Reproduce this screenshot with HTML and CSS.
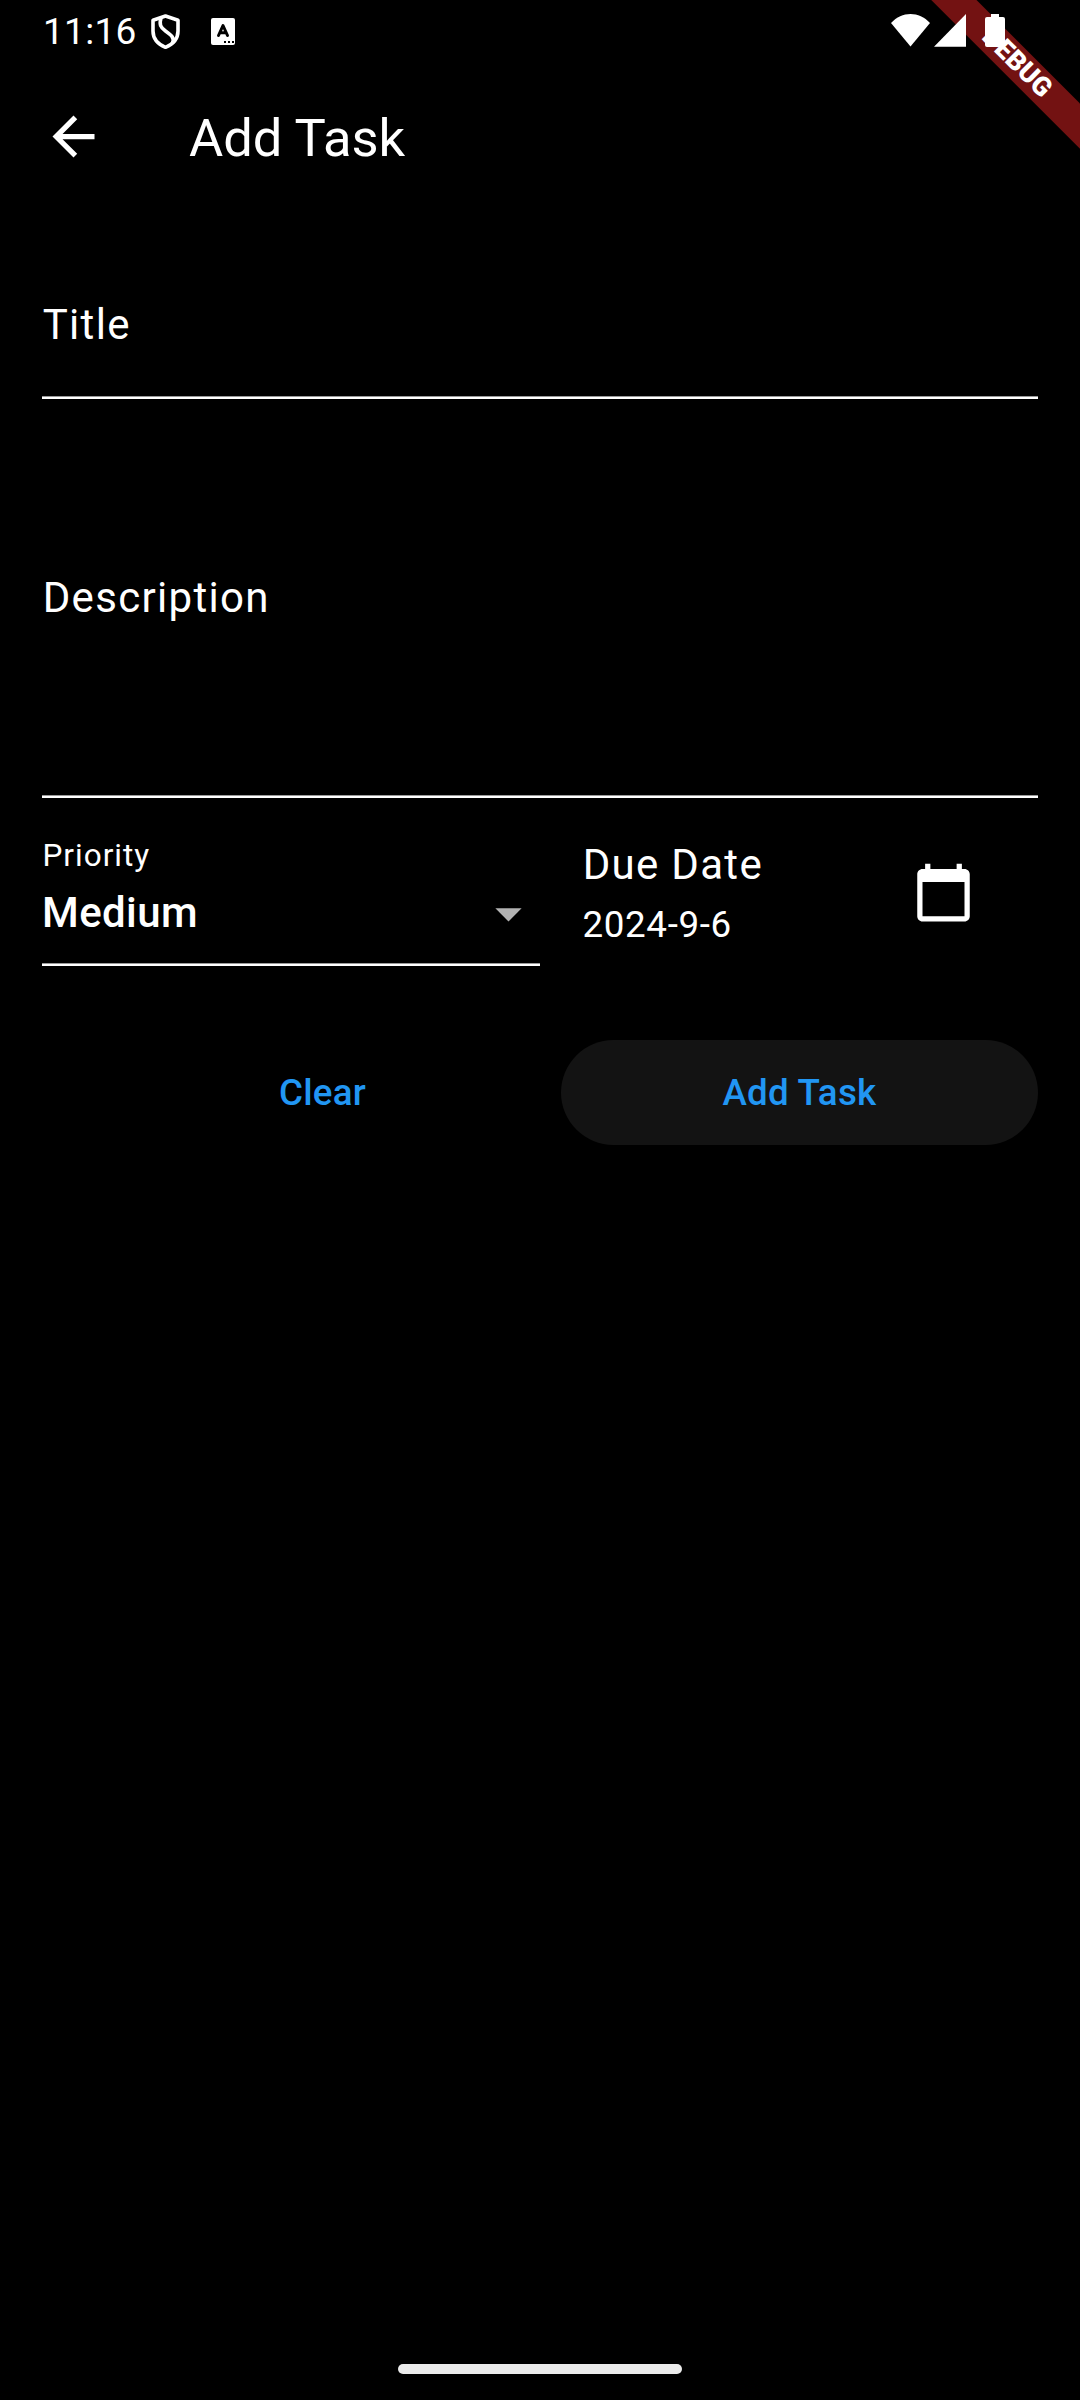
FILE: index.html
```html
<!DOCTYPE html>
<html lang="en">
<head>
<meta charset="utf-8">
<title>Add Task</title>
<link rel="stylesheet" href="styles.css">
</head>
<body>
<div class="screen">
  <div class="banner">DEBUG</div>
  <header class="status">
    <span class="clock">11:16</span>
    <svg class="shield" width="30" height="36" viewBox="0 0 30 36" fill="none" stroke="#fff" stroke-width="3.600" stroke-linejoin="round"><path d="M14.500 2 27 6.200V17c0 7.500-5 13.200-12.500 16.300C7 30.200 2 24.500 2 17V6.200z"/><path d="M10 4C8 10.500 9.500 13.500 14.500 17S24 23.500 21.500 29"/></svg>
    <svg class="letter" width="24" height="27" viewBox="0 0 24 27"><rect width="24" height="27" rx="2" fill="#fff"/><path d="M7.500 17.500 12 7.500l4.500 10M9 14.800h6" fill="none" stroke="#000" stroke-width="3" stroke-linecap="round" stroke-linejoin="round"/><path d="M13 23h2v2h-2zM17 23h2v2h-2zM21 23h2v2h-2z" fill="#000"/></svg>
    <svg class="signals" width="115" height="34" viewBox="0 0 115 34" fill="#fff"><path d="M0 9C11-3 28-3 39 9L19.500 32.500z"/><path d="M43 32.700 75 0v32.700z"/><path d="M100 0h8v3h4q2 0 2 2v26q0 2-2 2H96q-2 0-2-2V5q0-2 2-2h4z"/></svg>
  </header>
  <div class="appbar">
    <svg width="63" height="63" viewBox="0 0 24 24" fill="#fff"><path d="M20 11H7.830l5.590-5.590L12 4l-8 8 8 8 1.410-1.410L7.830 13H20v-2z"/></svg>
    <h1>Add Task</h1>
  </div>
  <main>
    <div class="field title">Title</div>
    <div class="field description">Description</div>
    <div class="row">
      <div class="field priority">
        <div class="small">Priority</div>
        <div class="select"><span>Medium</span><svg width="63" height="63" viewBox="0 0 24 24" fill="#b3b3b3"><path d="M7 10l5 5 5-5z"/></svg></div>
      </div>
      <div class="due">
        <div><div class="due-label">Due Date</div><div class="date">2024-9-6</div></div>
        <svg width="63" height="63" viewBox="0 0 24 24" fill="#fff"><path d="M20 3h-1V1h-2v2H7V1H5v2H4c-1.100 0-2 .9-2 2v16c0 1.100.9 2 2 2h16c1.100 0 2-.9 2-2V5c0-1.100-.9-2-2-2zm0 18H4V8h16v13z"/></svg>
      </div>
    </div>
    <div class="actions">
      <button>Clear</button>
      <button class="filled">Add Task</button>
    </div>
  </main>
  <div class="handle"></div>
</div>
</body>
</html>
```
FILE: styles.css
```css
* { box-sizing: border-box; }
body { margin: 0; background: #000; color: #fff; font-family: Roboto, sans-serif; }
svg { display: block; flex: none; }
.screen { position: relative; width: 1080px; height: 2400px; overflow: hidden; display: flex; flex-direction: column; }
.banner {
  position: absolute; left: 867px; top: 47.2px; width: 300px; height: 31.5px;
  transform: rotate(45deg); background: #731212;
  font-size: 26.800px; font-weight: 900; line-height: 31.5px; text-align: center;
}
.status { position: relative; height: 63px; padding: 14px 74px 0 43px; display: flex; align-items: flex-start; }
.clock { width: 108px; font-size: 37px; line-height: 36px; letter-spacing: .3px; }
.letter { margin: 4px 0 0 30px; }
.signals { margin-left: auto; }
.appbar { height: 147px; padding-left: 42px; display: flex; align-items: center; gap: 84px; }
h1 { margin: 0; padding-top: 3px; font-size: 52.5px; font-weight: 400; line-height: 64px; }
main { padding: 0 42px; }
.field {
  background: linear-gradient(#999 1px, #fff 1px) bottom / 100% 3px no-repeat;
  font-size: 42px; line-height: 50px; letter-spacing: 1.31px;
}
.title { height: 189px; padding: 90px 0 0 .7px; }
.description { height: 399px; padding: 174px 0 0 .7px; }
.row { display: grid; grid-template-columns: 498px 1fr; column-gap: 42px; height: 168px; }
.priority { padding-top: 39px; }
.small { padding-left: .5px; font-size: 31.5px; line-height: 38px; letter-spacing: 1px; }
.select { height: 63px; margin-top: 7px; display: flex; justify-content: space-between; align-items: center; font-weight: 500; letter-spacing: .4px; }
.select span { padding-bottom: 2px; }
.due { display: flex; justify-content: space-between; padding: 42px 63px 0 0; }
.due svg { margin-top: 20.500px; }
.due-label { padding-left: .7px; font-size: 42px; line-height: 50px; letter-spacing: 1.31px; }
.date { margin-top: 13px; padding-left: .4px; font-size: 36.750px; line-height: 44px; letter-spacing: .66px; }
.actions { display: grid; grid-template-columns: 1fr 1fr; padding-left: 42px; margin-top: 73.500px; }
button { height: 105px; padding: 0; border: 0; border-radius: 53px; background: none; color: #2196f3; font: 500 36.750px Roboto, sans-serif; letter-spacing: .26px; }
.filled { background: #131313; }
.handle { width: 284px; height: 10px; margin: auto auto 26px; border-radius: 5px; background: #ebebeb; }
```
